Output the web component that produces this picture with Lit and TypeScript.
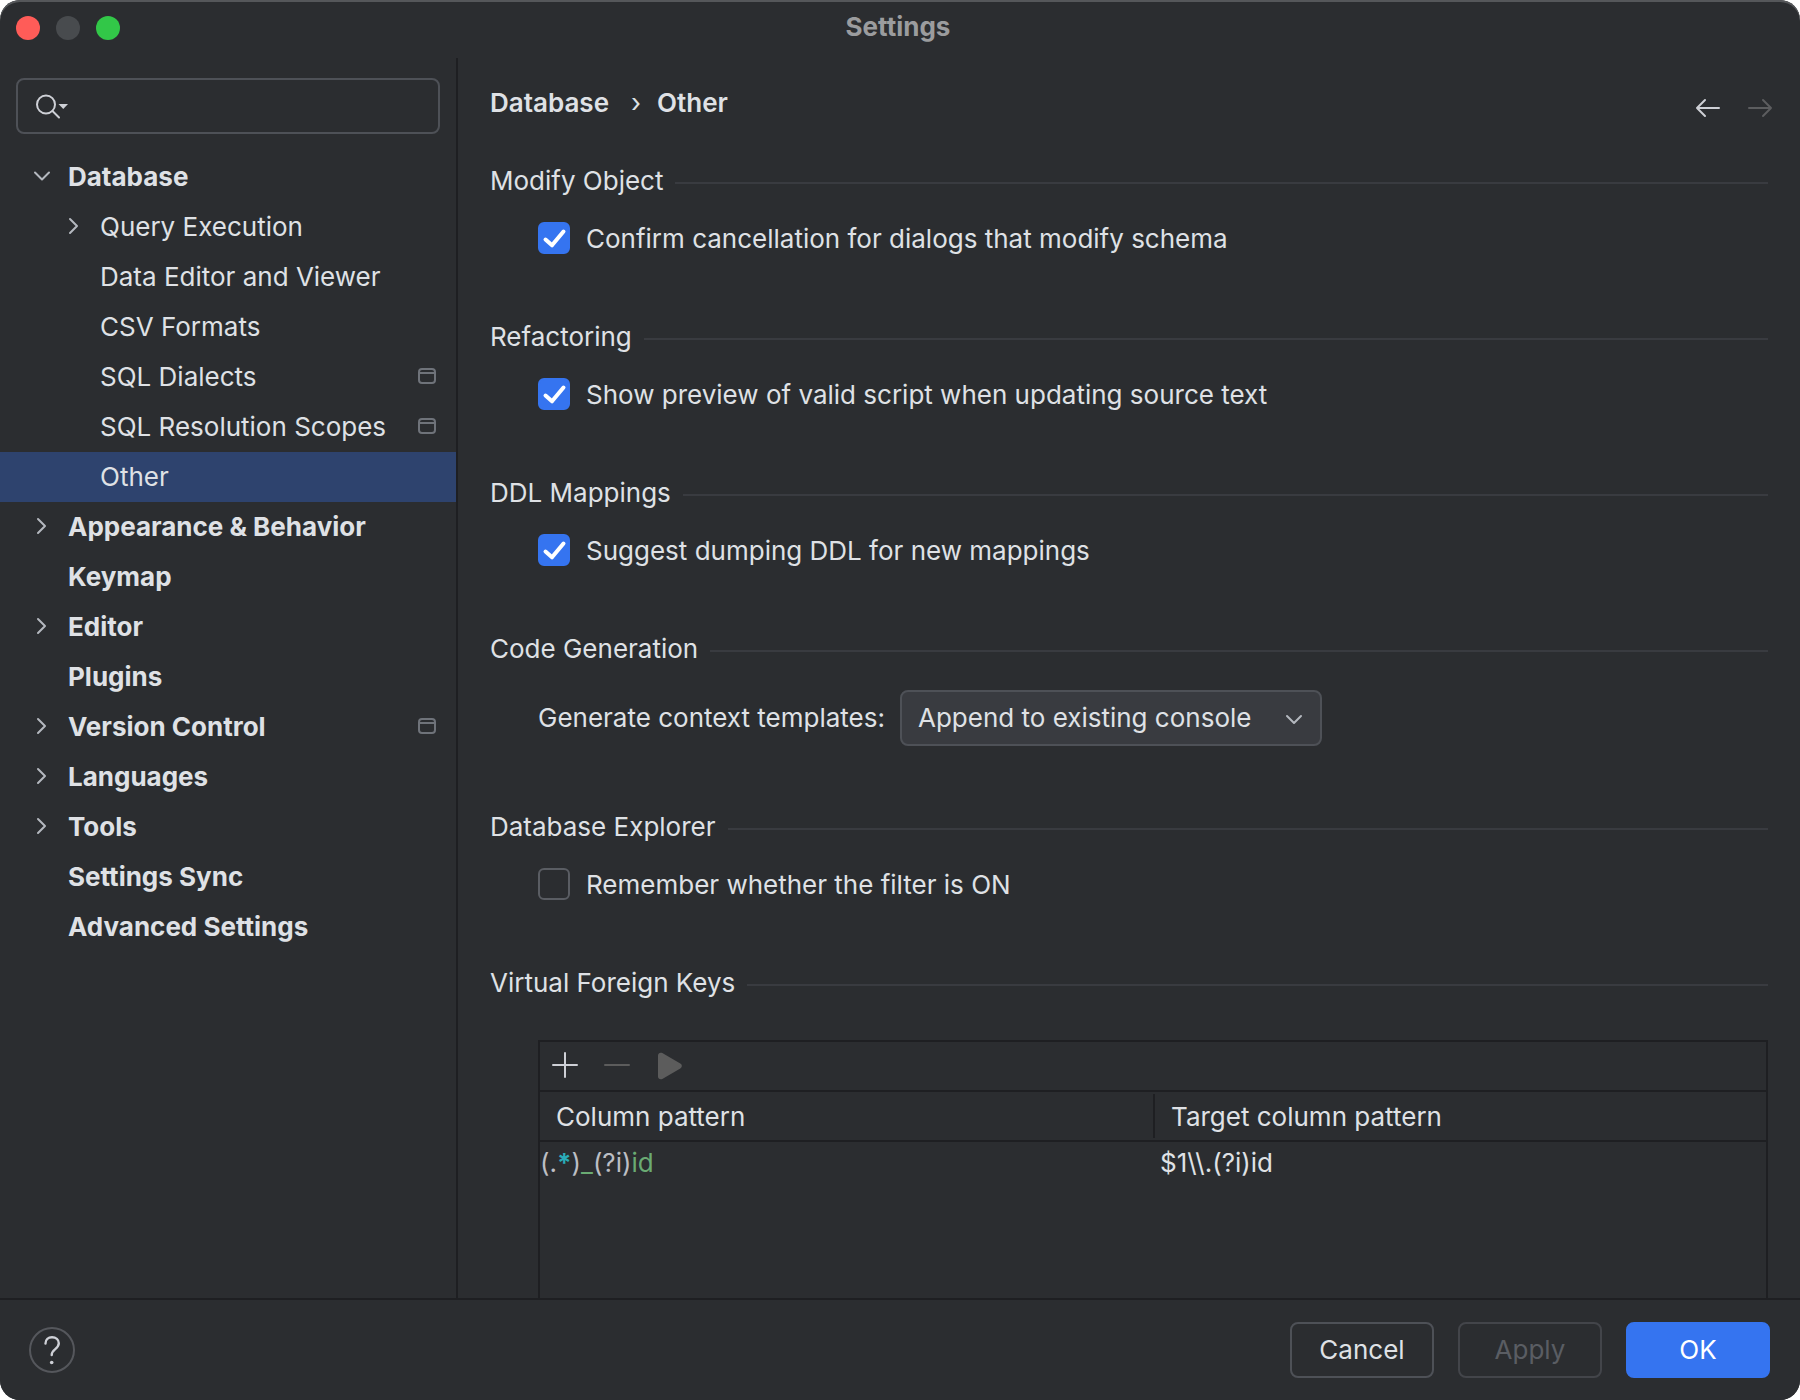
import { LitElement, html, css, svg, nothing } from "lit";
import { customElement, property, state } from "lit/decorators.js";
import { classMap } from "lit/directives/class-map.js";

interface TreeNode {
  label: string;
  level: 0 | 1;
  expandable?: boolean;
  expanded?: boolean;
  project?: boolean;
}

const TREE: TreeNode[] = [
  { label: "Database", level: 0, expandable: true, expanded: true },
  { label: "Query Execution", level: 1, expandable: true },
  { label: "Data Editor and Viewer", level: 1 },
  { label: "CSV Formats", level: 1 },
  { label: "SQL Dialects", level: 1, project: true },
  { label: "SQL Resolution Scopes", level: 1, project: true },
  { label: "Other", level: 1 },
  { label: "Appearance & Behavior", level: 0, expandable: true },
  { label: "Keymap", level: 0 },
  { label: "Editor", level: 0, expandable: true },
  { label: "Plugins", level: 0 },
  { label: "Version Control", level: 0, expandable: true, project: true },
  { label: "Languages", level: 0, expandable: true },
  { label: "Tools", level: 0, expandable: true },
  { label: "Settings Sync", level: 0 },
  { label: "Advanced Settings", level: 0 },
];

const chevronRight = svg`<path d="M12 8 L19 15 L12 22" fill="none" stroke="#b4b8bf" stroke-width="2" stroke-linecap="round" stroke-linejoin="round"/>`;
const chevronDown = svg`<path d="M9 11.500 L16 18.500 L23 11.500" fill="none" stroke="#b4b8bf" stroke-width="2" stroke-linecap="round" stroke-linejoin="round"/>`;

@customElement("settings-tree")
class SettingsTree extends LitElement {
  @state() private selected = "Other";

  static styles = css`
    :host {
      display: block;
    }
    .list {
      list-style: none;
      margin: 0;
      padding: 0;
    }
    .row {
      display: flex;
      align-items: center;
      height: 50px;
      padding: 0 20px 0 26px;
      color: #dfe1e5;
      text-decoration: none;
      font-weight: 700;
      white-space: nowrap;
    }
    .child {
      padding-left: 58px;
      font-weight: 400;
    }
    .selected {
      background: #2e436e;
    }
    .chevron {
      width: 32px;
      height: 32px;
      margin-right: 10px;
      flex: none;
    }
    .label {
      flex: 1;
    }
    .project {
      width: 18px;
      height: 16px;
      margin-bottom: 2px;
      flex: none;
    }
  `;

  render() {
    return html`<ul class="list">
      ${TREE.map(
        (n) => html`<li>
          <a
            href="#"
            class=${classMap({ row: true, child: n.level === 1, selected: n.label === this.selected })}
            aria-current=${n.label === this.selected ? "page" : nothing}
            @click=${(e: Event) => {
              e.preventDefault();
              this.selected = n.label;
            }}
          >
            <svg class="chevron" viewBox="0 0 32 32" aria-hidden="true">
              ${n.expandable ? (n.expanded ? chevronDown : chevronRight) : nothing}
            </svg>
            <span class="label">${n.label}</span>
            ${n.project
              ? html`<svg class="project" viewBox="0 0 18 16" aria-hidden="true">
                  <rect x="1" y="1" width="16" height="14" rx="3" fill="none" stroke="#6f737a" stroke-width="2" />
                  <path d="M1 5 H17" stroke="#6f737a" stroke-width="2" />
                </svg>`
              : nothing}
          </a>
        </li>`,
      )}
    </ul>`;
  }
}

@customElement("settings-section")
class SettingsSection extends LitElement {
  @property() heading = "";

  static styles = css`
    :host {
      display: flex;
      flex-direction: column;
      gap: 25px;
    }
    .title {
      display: flex;
      align-items: center;
      gap: 12px;
      margin: 0;
      font-size: 26px;
      line-height: 32px;
      font-weight: 400;
      white-space: nowrap;
    }
    .title::after {
      content: "";
      flex: 1;
      height: 2px;
      margin-top: 4px;
      background: #393b40;
    }
    .body {
      padding-left: 48px;
    }
  `;

  render() {
    return html`<h2 class="title">${this.heading}</h2>
      <div class="body"><slot></slot></div>`;
  }
}

@customElement("settings-check")
class SettingsCheck extends LitElement {
  @property() label = "";
  @property({ type: Boolean }) checked = false;

  static styles = css`
    :host {
      display: block;
    }
    .field {
      display: flex;
      align-items: center;
      gap: 16px;
      height: 34px;
    }
    .box {
      display: grid;
      align-self: flex-start;
      width: 32px;
      height: 32px;
    }
    .input,
    .mark {
      grid-area: 1 / 1;
      width: 32px;
      height: 32px;
      margin: 0;
    }
    .input {
      appearance: none;
      box-sizing: border-box;
      border: 2px solid #5a5d63;
      border-radius: 6px;
    }
    .input:checked {
      border-color: #3574f0;
      background: #3574f0;
    }
    .mark {
      pointer-events: none;
    }
  `;

  render() {
    return html`<label class="field">
      <span class="box">
        <input
          class="input"
          type="checkbox"
          .checked=${this.checked}
          @change=${(e: Event) => (this.checked = (e.target as HTMLInputElement).checked)}
        />
        ${this.checked
          ? html`<svg class="mark" viewBox="0 0 32 32" aria-hidden="true">
              <path
                d="M7.500 17.500 L14 23.300 L25.500 9.500"
                fill="none"
                stroke="#fff"
                stroke-width="4"
                stroke-linecap="round"
                stroke-linejoin="round"
              />
            </svg>`
          : nothing}
      </span>
      <span>${this.label}</span>
    </label>`;
  }
}

@customElement("app-root")
class AppRoot extends LitElement {
  static styles = css`
    :host {
      display: flex;
      flex-direction: column;
      box-sizing: border-box;
      height: 100vh;
      overflow: hidden;
      border-radius: 20px;
      background: #2b2d30;
      box-shadow: inset 0 2px 0 #55575a;
      color: #dfe1e5;
      font-family: Inter, "Liberation Sans", sans-serif;
      font-size: 26px;
      line-height: 32px;
    }
    button,
    input,
    select {
      font: inherit;
      color: inherit;
    }
    .titlebar {
      display: grid;
      grid-template-columns: 1fr auto 1fr;
      align-items: center;
      box-sizing: border-box;
      height: 58px;
      padding: 0 20px 2px 16px;
      flex: none;
    }
    .lights {
      display: flex;
      gap: 16px;
    }
    .light {
      width: 24px;
      height: 24px;
      padding: 0;
      border: 0;
      border-radius: 50%;
    }
    .close {
      background: #ff5c58;
    }
    .minimize {
      background: #484b4e;
    }
    .zoom {
      background: #32c748;
    }
    .caption {
      margin: 0;
      padding-bottom: 2px;
      font-size: 26px;
      font-weight: 700;
      color: #9b9c9e;
    }
    .workspace {
      display: flex;
      flex: 1;
      min-height: 0;
    }
    .sidebar {
      box-sizing: border-box;
      width: 458px;
      flex: none;
      border-right: 2px solid #1e1f22;
    }
    .search {
      display: flex;
      align-items: center;
      box-sizing: border-box;
      height: 56px;
      margin: 20px 16px 18px;
      border: 2px solid #4e5157;
      border-radius: 8px;
    }
    .search-options {
      display: flex;
      padding: 0 0 0 14px;
      border: 0;
      background: none;
    }
    .search-input {
      flex: 1;
      min-width: 0;
      padding: 0 8px;
      border: 0;
      outline: 0;
      background: none;
    }
    .main {
      display: flex;
      flex-direction: column;
      flex: 1;
      min-width: 0;
      padding-left: 32px;
    }
    .header {
      display: flex;
      justify-content: space-between;
      align-items: flex-start;
      box-sizing: border-box;
      height: 107px;
      padding-right: 24px;
      flex: none;
    }
    .crumbs {
      display: flex;
      padding-top: 29px;
      gap: 16px;
      font-weight: 600;
    }
    .crumb {
      color: inherit;
      text-decoration: none;
    }
    .crumb-mark {
      padding-left: 6px;
      font-weight: 400;
    }
    .history {
      display: flex;
      gap: 20px;
      padding-top: 34px;
    }
    .icon-button {
      display: flex;
      padding: 0;
      border: 0;
      background: none;
    }
    .sections {
      display: flex;
      flex-direction: column;
      flex: 1;
      min-height: 0;
      gap: 65px;
      padding-right: 32px;
    }
    .combo-row {
      display: flex;
      align-items: center;
      gap: 15px;
    }
    .combo {
      display: grid;
      align-items: center;
    }
    .select {
      grid-area: 1 / 1;
      appearance: none;
      box-sizing: border-box;
      height: 56px;
      padding: 0 68px 0 16px;
      border: 2px solid #4e5157;
      border-radius: 8px;
      background: #393b40;
    }
    .combo-arrow {
      grid-area: 1 / 1;
      justify-self: end;
      margin-right: 12px;
      pointer-events: none;
    }
    .panel {
      margin-top: 16px;
      height: 480px;
      border: 2px solid #1e1f22;
    }
    .toolbar {
      display: flex;
      align-items: center;
      gap: 20px;
      box-sizing: border-box;
      height: 50px;
      padding: 0 9px 2px;
      border-bottom: 2px solid #1e1f22;
    }
    .patterns {
      width: 100%;
      table-layout: fixed;
      border-collapse: collapse;
    }
    .patterns th {
      height: 48px;
      padding: 0;
      border-bottom: 2px solid #1e1f22;
      font-weight: 400;
      text-align: left;
    }
    .head {
      padding: 7px 16px 5px;
    }
    .head-split {
      border-left: 2px solid #1e1f22;
    }
    .patterns td {
      height: 42px;
      padding: 0;
    }
    .patterns .target {
      padding-left: 7px;
    }
    .regex {
      color: #bcbec4;
    }
    .quantifier {
      color: #2aacb8;
      font-weight: 700;
    }
    .literal {
      color: #6aab73;
    }
    .footer {
      display: flex;
      align-items: center;
      gap: 24px;
      box-sizing: border-box;
      height: 102px;
      padding: 0 30px 0 29px;
      border-top: 2px solid #1e1f22;
      background: #2b2d30;
      flex: none;
      z-index: 1;
    }
    .help {
      display: flex;
      margin-right: auto;
      padding: 0;
      border: 0;
      background: none;
    }
    .button {
      box-sizing: border-box;
      width: 144px;
      height: 56px;
      padding: 0;
      border: 2px solid #4e5157;
      border-radius: 8px;
      background: none;
    }
    .button:disabled {
      border-color: #43454a;
      color: #5a5d63;
    }
    .primary {
      border-color: #3574f0;
      background: #3574f0;
      color: #fff;
    }
  `;

  render() {
    return html`
      <header class="titlebar">
        <div class="lights">
          <button class="light close" aria-label="Close"></button>
          <button class="light minimize" aria-label="Minimize" disabled></button>
          <button class="light zoom" aria-label="Zoom"></button>
        </div>
        <h1 class="caption">Settings</h1>
      </header>

      <div class="workspace">
        <nav class="sidebar" aria-label="Settings categories">
          <div class="search">
            <button class="search-options" aria-label="Search history">
              <svg width="40" height="32" viewBox="0 0 40 32" aria-hidden="true">
                <circle cx="14" cy="14.500" r="9" fill="none" stroke="#ced0d6" stroke-width="2" />
                <path d="M20.500 21 L27 27.500" stroke="#ced0d6" stroke-width="2" stroke-linecap="round" />
                <path d="M26.500 14 H36 L31.250 19 Z" fill="#ced0d6" />
              </svg>
            </button>
            <input class="search-input" type="text" aria-label="Search settings" />
          </div>
          <settings-tree></settings-tree>
        </nav>

        <main class="main">
          <div class="header">
            <div class="crumbs">
              <a class="crumb" href="#">Database</a>
              <span class="crumb-mark">›</span>
              <span>Other</span>
            </div>
            <div class="history">
              <button class="icon-button" aria-label="Back">
                <svg width="32" height="32" viewBox="0 0 32 32" fill="none" stroke="#ced0d6" stroke-width="2" stroke-linecap="round" stroke-linejoin="round">
                  <path d="M27 16 H5 M13 8 L5 16 L13 24" />
                </svg>
              </button>
              <button class="icon-button" aria-label="Forward" disabled>
                <svg width="32" height="32" viewBox="0 0 32 32" fill="none" stroke="#5c5d5f" stroke-width="2" stroke-linecap="round" stroke-linejoin="round">
                  <path d="M5 16 H27 M19 8 L27 16 L19 24" />
                </svg>
              </button>
            </div>
          </div>

          <div class="sections">
            <settings-section heading="Modify Object">
              <settings-check checked label="Confirm cancellation for dialogs that modify schema"></settings-check>
            </settings-section>
            <settings-section heading="Refactoring">
              <settings-check checked label="Show preview of valid script when updating source text"></settings-check>
            </settings-section>
            <settings-section heading="DDL Mappings">
              <settings-check checked label="Suggest dumping DDL for new mappings"></settings-check>
            </settings-section>
            <settings-section heading="Code Generation">
              <div class="combo-row">
                <label for="templates">Generate context templates:</label>
                <div class="combo">
                  <select class="select" id="templates">
                    <option>Append to existing console</option>
                  </select>
                  <svg class="combo-arrow" width="32" height="32" viewBox="0 0 32 32" aria-hidden="true">
                    <path d="M9 14 L16 21 L23 14" fill="none" stroke="#b4b8bf" stroke-width="2" stroke-linecap="round" stroke-linejoin="round" />
                  </svg>
                </div>
              </div>
            </settings-section>
            <settings-section heading="Database Explorer">
              <settings-check label="Remember whether the filter is ON"></settings-check>
            </settings-section>
            <settings-section heading="Virtual Foreign Keys">
              <div class="panel">
                <div class="toolbar">
                  <button class="icon-button" aria-label="Add">
                    <svg width="32" height="32" viewBox="0 0 32 32" stroke="#ced0d6" stroke-width="2" stroke-linecap="round">
                      <path d="M4 16 H28 M16 4 V28" />
                    </svg>
                  </button>
                  <button class="icon-button" aria-label="Remove" disabled>
                    <svg width="32" height="32" viewBox="0 0 32 32" stroke="#5c5c5c" stroke-width="2" stroke-linecap="round">
                      <path d="M4 16 H28" />
                    </svg>
                  </button>
                  <button class="icon-button" aria-label="Run" disabled>
                    <svg width="32" height="32" viewBox="1 0 32 32" fill="#5c5c5c">
                      <path d="M6 6.500 C6 4.200 8.300 3 10.300 4.100 L28.300 14.600 C30.400 15.800 30.400 18.200 28.300 19.400 L10.300 29.900 C8.300 31 6 29.800 6 27.500 Z" />
                    </svg>
                  </button>
                </div>
                <table class="patterns">
                  <thead>
                    <tr>
                      <th scope="col"><div class="head">Column pattern</div></th>
                      <th scope="col"><div class="head head-split">Target column pattern</div></th>
                    </tr>
                  </thead>
                  <tbody>
                    <tr>
                      <td class="regex">(.<span class="quantifier">*</span>)<span class="literal">_</span>(?i)<span class="literal">id</span></td>
                      <td class="target">$1\\\\.(?i)id</td>
                    </tr>
                  </tbody>
                </table>
              </div>
            </settings-section>
          </div>
        </main>
      </div>

      <footer class="footer">
        <button class="help" aria-label="Help">
          <svg width="46" height="46" viewBox="0 0 46 46" fill="none" aria-hidden="true">
            <circle cx="23" cy="23" r="22" stroke="#55575c" stroke-width="2" />
            <path d="M16.500 16.500 C16.500 12.500 19.300 10.200 23 10.200 C26.800 10.200 29.800 12.600 29.800 16.300 C29.800 19.300 28 20.800 26 22.400 C23.800 24.200 22.700 25.300 22.700 28" stroke="#ced0d6" stroke-width="2.400" stroke-linecap="round" />
            <circle cx="22.700" cy="35.500" r="1.800" fill="#ced0d6" />
          </svg>
        </button>
        <button class="button">Cancel</button>
        <button class="button" disabled>Apply</button>
        <button class="button primary">OK</button>
      </footer>
    `;
  }
}
